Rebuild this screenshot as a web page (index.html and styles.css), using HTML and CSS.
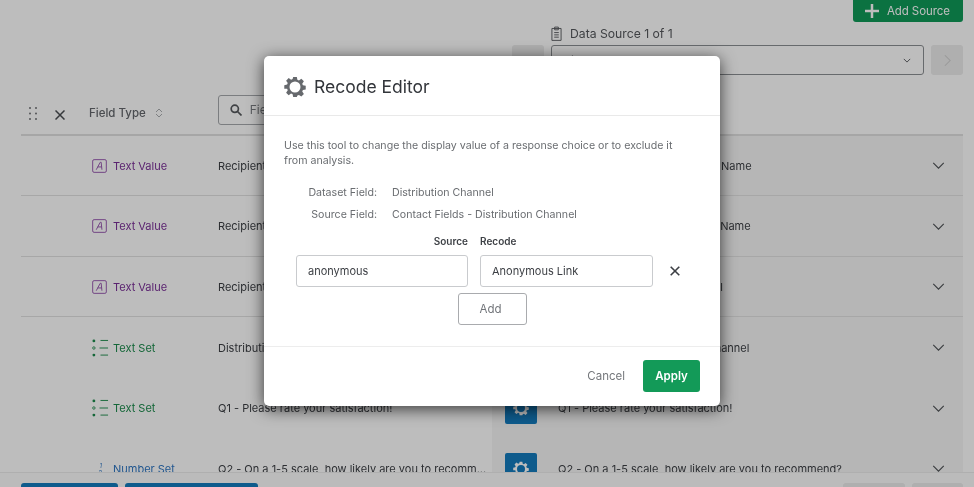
FILE: index.html
```html
<!DOCTYPE html>
<html lang="en">
<head>
<meta charset="utf-8">
<title>Recode Editor</title>
<link rel="stylesheet" href="styles.css">
</head>
<body>
<div class="page">
  <main class="main">
    <div class="topbar">
      <button class="add-source"><svg class="plus" viewBox="0 0 14 14"><path d="M7 0v14M0 7h14"/></svg>Add Source</button>
    </div>
    <div class="source">
      <div class="source-label">
        <svg class="clip" viewBox="0 0 12 16"><path d="M1 2.500h10v13H1zM4 1h4v3H4zM3.500 7h5M3.500 9.500h5M3.500 12h5"/></svg>
        <span>Data Source 1 of 1</span>
      </div>
      <div class="source-row">
        <button class="nav"></button>
        <div class="select"><span>Field Type</span><svg class="select-chev" viewBox="0 0 10 6"><path d="M1 1l4 4 4-4"/></svg></div>
        <button class="nav"><svg class="nav-chev" viewBox="0 0 8 14"><path d="M1 1l6 6-6 6"/></svg></button>
      </div>
    </div>
    <div class="table">
      <div class="head">
        <svg class="dots" viewBox="0 0 8 13"><circle cx="1" cy="1" r="1"/><circle cx="7" cy="1" r="1"/><circle cx="1" cy="6.500" r="1"/><circle cx="7" cy="6.500" r="1"/><circle cx="1" cy="12" r="1"/><circle cx="7" cy="12" r="1"/></svg>
        <svg class="head-x" viewBox="0 0 10 10"><path d="M.5.500l9 9M9.500.500l-9 9"/></svg>
        <span class="head-type">Field Type</span>
        <svg class="sort" viewBox="0 0 8 10"><path d="M1 4l3-3 3 3M1 6l3 3 3-3"/></svg>
        <div class="search">
          <svg class="search-ico" viewBox="0 0 12 12"><circle cx="4.800" cy="4.800" r="3.600"/><path d="M7.500 7.500l4 4"/></svg>
          <span>Field Name</span>
        </div>
      </div>
      <div class="row line">
        <div class="type purple"><svg class="ico-a" viewBox="0 0 16 15"><rect x=".7" y=".7" width="14.600" height="13.600" rx="1.500"/><path d="M4.500 11.500L8.800 3.500h1l.8 8M6 8.500h4.400"/></svg>Text Value</div>
        <div class="field">Recipient First Name</div>
        <div class="mapped"><span class="gear-box"><svg class="gear-w" viewBox="0 0 24 24"><use href="#gear"/></svg></span><span>Contact Fields - Recipient First Name</span><svg class="chev" viewBox="0 0 14 8"><path d="M1 1l6 6 6-6"/></svg></div>
      </div>
      <div class="row line">
        <div class="type purple"><svg class="ico-a" viewBox="0 0 16 15"><rect x=".7" y=".7" width="14.600" height="13.600" rx="1.500"/><path d="M4.500 11.500L8.800 3.500h1l.8 8M6 8.500h4.400"/></svg>Text Value</div>
        <div class="field">Recipient Last Name</div>
        <div class="mapped"><span class="gear-box"><svg class="gear-w" viewBox="0 0 24 24"><use href="#gear"/></svg></span><span>Contact Fields - Recipient Last Name</span><svg class="chev" viewBox="0 0 14 8"><path d="M1 1l6 6 6-6"/></svg></div>
      </div>
      <div class="row line">
        <div class="type purple"><svg class="ico-a" viewBox="0 0 16 15"><rect x=".7" y=".7" width="14.600" height="13.600" rx="1.500"/><path d="M4.500 11.500L8.800 3.500h1l.8 8M6 8.500h4.400"/></svg>Text Value</div>
        <div class="field">Recipient Email</div>
        <div class="mapped"><span class="gear-box"><svg class="gear-w" viewBox="0 0 24 24"><use href="#gear"/></svg></span><span>Contact Fields - Recipient Email</span><svg class="chev" viewBox="0 0 14 8"><path d="M1 1l6 6 6-6"/></svg></div>
      </div>
      <div class="row">
        <div class="type green"><svg class="ico-set" viewBox="0 0 18 18"><circle cx="2" cy="1.500" r="1.500"/><circle class="open" cx="2" cy="9" r="1.300"/><circle cx="2" cy="16.500" r="1.500"/><path d="M9 1h8M8 9h9M9 16.500h8"/></svg>Text Set</div>
        <div class="field">Distribution Channel</div>
        <div class="mapped"><span class="gear-box"><svg class="gear-w" viewBox="0 0 24 24"><use href="#gear"/></svg></span><span>Contact Fields - Distribution Channel</span><svg class="chev" viewBox="0 0 14 8"><path d="M1 1l6 6 6-6"/></svg></div>
      </div>
      <div class="row">
        <div class="type green"><svg class="ico-set" viewBox="0 0 18 18"><circle cx="2" cy="1.500" r="1.500"/><circle class="open" cx="2" cy="9" r="1.300"/><circle cx="2" cy="16.500" r="1.500"/><path d="M9 1h8M8 9h9M9 16.500h8"/></svg>Text Set</div>
        <div class="field">Q1 - Please rate your satisfaction!</div>
        <div class="mapped"><span class="gear-box"><svg class="gear-w" viewBox="0 0 24 24"><use href="#gear"/></svg></span><span>Q1 - Please rate your satisfaction!</span><svg class="chev" viewBox="0 0 14 8"><path d="M1 1l6 6 6-6"/></svg></div>
      </div>
      <div class="row">
        <div class="type blue"><span class="ico-num"><i>1</i><i>2</i></span>Number Set</div>
        <div class="field">Q2 - On a 1-5 scale, how likely are you to recomm...</div>
        <div class="mapped"><span class="gear-box"><svg class="gear-w" viewBox="0 0 24 24"><use href="#gear"/></svg></span><span>Q2 - On a 1-5 scale, how likely are you to recommend?</span><svg class="chev" viewBox="0 0 14 8"><path d="M1 1l6 6 6-6"/></svg></div>
      </div>
    </div>
  </main>
  <footer class="footer">
    <div class="foot-blue one"></div>
    <div class="foot-blue two"></div>
    <div class="foot-spacer"></div>
    <div class="foot-grey one"></div>
    <div class="foot-grey two"></div>
  </footer>
  <div class="scrim"></div>
  <section class="modal">
    <header class="modal-head">
      <svg class="gear-d" viewBox="0 0 24 24"><use href="#gear"/></svg>
      <h1>Recode Editor</h1>
    </header>
    <div class="modal-body">
      <p class="intro">Use this tool to change the display value of a response choice or to exclude it from analysis.</p>
      <dl class="meta">
        <dt>Dataset Field:</dt><dd>Distribution Channel</dd>
        <dt>Source Field:</dt><dd>Contact Fields - Distribution Channel</dd>
      </dl>
      <div class="recode-head"><span>Source</span><span>Recode</span></div>
      <div class="recode-row">
        <div class="input">anonymous</div>
        <div class="input">Anonymous Link</div>
        <svg class="remove" viewBox="0 0 10 10"><path d="M.7.700l8.600 8.600M9.300.700L.7 9.300"/></svg>
      </div>
      <div class="add-wrap"><button class="add">Add</button></div>
    </div>
    <footer class="modal-foot">
      <button class="cancel">Cancel</button>
      <button class="apply">Apply</button>
    </footer>
  </section>
  <svg class="defs" aria-hidden="true"><defs><path id="gear" fill-rule="evenodd" d="M10 1h4l.6 3.100 1.700.7 2.600-1.800 2.800 2.800-1.800 2.600.7 1.700 3.100.6v4l-3.100.6-.7 1.700 1.800 2.600-2.800 2.800-2.600-1.800-1.700.7L14 23h-4l-.6-3.100-1.700-.7-2.600 1.800-2.800-2.800 1.800-2.600-.7-1.700L.3 14v-4l3.100-.6.700-1.700L2.300 5.100l2.800-2.800 2.600 1.800 1.700-.7zM12 6a6 6 0 1 0 0 12 6 6 0 0 0 0-12z"/></defs></svg>
</div>
</body>
</html>
```
FILE: styles.css
```css
* { box-sizing: border-box; }
html, body { margin: 0; height: 100%; }
body { overflow: hidden; background: #fff; }
button { font: inherit; padding: 0; border: 0; }

.page {
  position: relative;
  width: 974px;
  height: 487px;
  overflow: hidden;
  display: flex;
  flex-direction: column;
  font-family: Inter, "Liberation Sans", sans-serif;
  font-size: 11px;
  color: #3c3f44;
  background: #fff;
  filter: blur(.45px);
}
.defs { width: 0; height: 0; position: absolute; }

.main { flex: 1; min-height: 0; overflow: hidden; }

.topbar { height: 22px; display: flex; justify-content: flex-end; padding-right: 11px; }
.add-source {
  width: 110px; height: 22px;
  border-radius: 0 0 3px 3px;
  background: #0f9a58;
  color: #fff;
  display: flex; align-items: center;
  padding-left: 12px;
  font-size: 11.500px;
  letter-spacing: -.1px;
}
.plus { width: 14px; height: 14px; margin-right: 8px; fill: none; stroke: #fff; stroke-width: 2.500; }

.source { height: 74px; padding-left: 512px; padding-right: 11px; }
.source-label { height: 23px; display: flex; align-items: center; padding-left: 39px; font-size: 12.200px; color: #55585c; gap: 8px; }
.clip { width: 11px; height: 15px; fill: none; stroke: #55585c; stroke-width: 1; }
.source-row { display: flex; gap: 7px; }
.nav { width: 32px; height: 30px; border-radius: 3px; background: #ececec; display: flex; align-items: center; justify-content: center; }
.nav-chev { width: 7px; height: 13px; fill: none; stroke: #cfcfcf; stroke-width: 1.200; }
.select { width: 373px; height: 30px; border: 1px solid #8c8f93; border-radius: 3px; background: #fff; display: flex; align-items: center; justify-content: space-between; padding: 0 12px; font-size: 12px; }
.select-chev { width: 8px; height: 5px; fill: none; stroke: #5b5e62; stroke-width: 1.200; }

.table { margin: 0 11px 0 21px; }
.head {
  height: 39.500px;
  border-bottom: 2px solid #e0e0e0;
  display: flex;
  align-items: center;
  padding: 0 0 6px 8px;
}
.dots { width: 8px; height: 13px; fill: #6f7276; margin-top: 4px; }
.head-x { width: 10px; height: 10px; margin: 6px 0 0 18px; fill: none; stroke: #4a4d52; stroke-width: 1.500; }
.head-type { margin: 2px 0 0 24px; font-size: 11.500px; font-weight: 500; color: #64676c; }
.sort { width: 8px; height: 10px; margin: 2px 0 0 9px; fill: none; stroke: #a9acaf; stroke-width: 1; }
.search {
  width: 300px; height: 30px; margin-left: 55px; margin-top: -4px;
  border: 1px solid #a6a9ad; border-radius: 3px;
  display: flex; align-items: center; padding-left: 11px; gap: 8px;
  color: #7b7e82; font-size: 12px;
}
.search-ico { width: 12px; height: 12px; fill: none; stroke: #55585c; stroke-width: 1.700; }

.row {
  height: 60.500px;
  display: grid;
  grid-template-columns: 197px 274px 1fr;
  align-items: stretch;
}
.row.line > * { border-bottom: 1px solid #e2e2e2; }
.type { display: flex; align-items: center; padding: 1px 0 0 71px; gap: 6px; font-size: 11px; }
.purple { color: #7a2f97; }
.green { color: #1d8b4d; }
.blue { color: #2f76c2; }
.ico-a { width: 15px; height: 14px; fill: none; stroke: #9452ad; stroke-width: 1; }
.ico-set { width: 17px; height: 18px; margin-right: -2px; fill: #1d8b4d; stroke: none; flex: none; }
.ico-set path { stroke: #1d8b4d; stroke-width: 1; fill: none; }
.ico-set .open { fill: none; stroke: #1d8b4d; stroke-width: .9; }
.ico-num { width: 15px; display: flex; flex-direction: column; align-items: flex-end; padding-right: 5px; font-size: 6px; line-height: 7px; font-style: italic; }
.ico-num i { display: block; }
.field { display: flex; align-items: center; padding-top: 1px; white-space: nowrap; overflow: hidden; color: #3c3f44; }
.mapped { background: #f6f6f6; display: flex; align-items: center; padding: 1px 18px 0 13px; gap: 21px; white-space: nowrap; color: #3c3f44; }
.gear-box { width: 32px; height: 32px; border-radius: 2px; background: #147bbd; display: flex; align-items: center; justify-content: center; flex: none; }
.gear-w { width: 16px; height: 16px; fill: #fff; }
.chev { width: 13px; height: 7px; margin-left: auto; fill: none; stroke: #4f5256; stroke-width: 1.300; }

.footer {
  height: 15px; flex: none;
  background: #fdfdfd;
  border-top: 1px solid #ececec;
  display: flex;
  gap: 7px;
  padding: 10px 11px 0 21px;
  overflow: hidden;
}
.foot-spacer { flex: 1; }
.foot-blue { height: 20px; border-radius: 3px; background: #147bbd; }
.foot-blue.one { width: 97px; }
.foot-blue.two { width: 133px; }
.foot-grey { height: 20px; border-radius: 3px; background: #ececec; }
.foot-grey.one { width: 62px; }
.foot-grey.two { width: 51px; }

.scrim { position: absolute; inset: 0; background: rgba(0, 0, 0, .26); }

.modal {
  position: absolute;
  left: 264px; top: 56px;
  width: 456px; height: 350px;
  border-radius: 5px;
  background: #fff;
  box-shadow: 0 3px 16px rgba(0, 0, 0, .7);
  display: flex;
  flex-direction: column;
}
.modal-head {
  height: 60px; flex: none;
  border-bottom: 1px solid #e9e9e9;
  display: flex; align-items: center;
  padding: 2px 0 0 20px;
  gap: 8px;
}
.gear-d { width: 22px; height: 22px; fill: #66696d; }
.modal-head h1 { margin: 0; font-size: 17.500px; font-weight: 400; color: #32353a; }
.modal-body { flex: 1; padding: 22px 20px 0 20px; color: #6a6d71; }
.intro { margin: 0; font-size: 10.630px; line-height: 15px; width: 400px; }
.meta { margin: 18px 0 0; display: grid; grid-template-columns: 93px 1fr; column-gap: 15px; row-gap: 8px; line-height: 14px; font-size: 10.630px; }
.meta dt { text-align: right; }
.meta dd { margin: 0; }
.recode-head { margin-top: 12px; height: 14px; padding-left: 12px; display: grid; grid-template-columns: 172px 173px; column-gap: 12px; font-size: 10px; font-weight: 600; color: #3f4247; line-height: 14px; }
.recode-head span:first-child { text-align: right; }
.recode-row { margin-top: 7px; padding-left: 12px; display: flex; align-items: center; gap: 12px; }
.input { height: 32px; border: 1px solid #c9cbce; border-radius: 3px; display: flex; align-items: center; padding-left: 11px; font-size: 11px; color: #3c3f44; width: 172px; }
.input + .input { width: 173px; }
.remove { width: 10px; height: 10px; margin-left: 5px; fill: none; stroke: #3c3f44; stroke-width: 1.600; }
.add-wrap { margin-top: 6px; padding-left: 174px; }
.add { width: 69px; height: 32px; padding-right: 4px; border: 1px solid #a9abae; border-radius: 3px; background: #fff; color: #72757a; font-size: 11.500px; }
.modal-foot { height: 60px; flex: none; border-top: 1px solid #ededed; display: flex; align-items: center; justify-content: flex-end; padding: 0 20px 1px 0; gap: 18px; }
.cancel { background: none; color: #75787c; font-size: 11.500px; }
.apply { width: 57px; height: 32px; border-radius: 3px; background: #139a58; color: #fff; font-size: 11.500px; font-weight: 600; }
```
